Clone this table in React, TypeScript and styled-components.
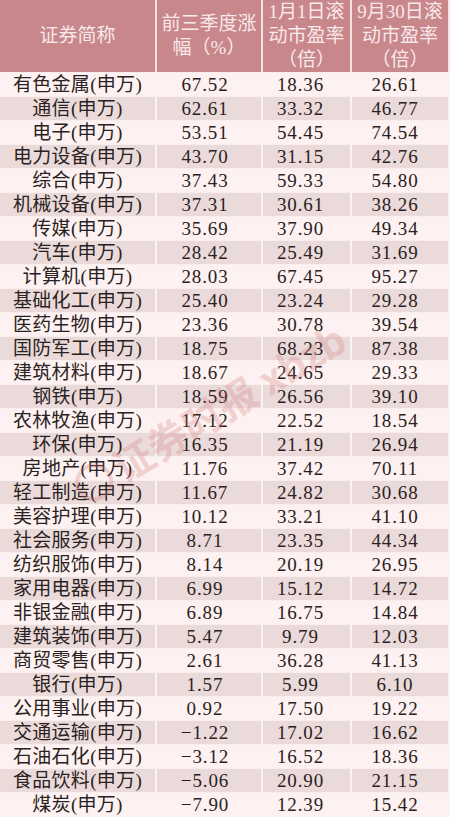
import styled, { createGlobalStyle } from 'styled-components';

type Row = [string, string, string, string];

const rows: Row[] = [
  ['有色金属', '67.52', '18.36', '26.61'],
  ['通信', '62.61', '33.32', '46.77'],
  ['电子', '53.51', '54.45', '74.54'],
  ['电力设备', '43.70', '31.15', '42.76'],
  ['综合', '37.43', '59.33', '54.80'],
  ['机械设备', '37.31', '30.61', '38.26'],
  ['传媒', '35.69', '37.90', '49.34'],
  ['汽车', '28.42', '25.49', '31.69'],
  ['计算机', '28.03', '67.45', '95.27'],
  ['基础化工', '25.40', '23.24', '29.28'],
  ['医药生物', '23.36', '30.78', '39.54'],
  ['国防军工', '18.75', '68.23', '87.38'],
  ['建筑材料', '18.67', '24.65', '29.33'],
  ['钢铁', '18.59', '26.56', '39.10'],
  ['农林牧渔', '17.12', '22.52', '18.54'],
  ['环保', '16.35', '21.19', '26.94'],
  ['房地产', '11.76', '37.42', '70.11'],
  ['轻工制造', '11.67', '24.82', '30.68'],
  ['美容护理', '10.12', '33.21', '41.10'],
  ['社会服务', '8.71', '23.35', '44.34'],
  ['纺织服饰', '8.14', '20.19', '26.95'],
  ['家用电器', '6.99', '15.12', '14.72'],
  ['非银金融', '6.89', '16.75', '14.84'],
  ['建筑装饰', '5.47', '9.79', '12.03'],
  ['商贸零售', '2.61', '36.28', '41.13'],
  ['银行', '1.57', '5.99', '6.10'],
  ['公用事业', '0.92', '17.50', '19.22'],
  ['交通运输', '−1.22', '17.02', '16.62'],
  ['石油石化', '−3.12', '16.52', '18.36'],
  ['食品饮料', '−5.06', '20.90', '21.15'],
  ['煤炭', '−7.90', '12.39', '15.42'],
];

const GlobalStyle = createGlobalStyle`
  html, body {
    margin: 0;
    padding: 0;
    background: #fdf2f1;
  }
  body {
    font-family: "Liberation Serif", "Noto Sans CJK SC", serif;
  }
`;

const Page = styled.div`
  position: relative;
  width: 450px;
  height: 817px;
  overflow: hidden;
`;

const Table = styled.div`
  display: grid;
  grid-template-columns: 157px 106px 89px 98px;
  grid-auto-rows: 24px;
`;

const HeadCell = styled.div`
  grid-row: span 3;
  background: #c8878b;
  color: #f9e9ea;
  font-size: 19px;
  line-height: 24px;
  display: flex;
  flex-direction: column;
  align-items: center;
  justify-content: center;
  text-align: center;
  border-right: 2px solid #f6e4e4;
  &:last-child { border-right: none; }
`;

const Cell = styled.div<{ $dark: boolean; $pad?: number }>`
  background: ${(p) => (p.$dark ? '#ebdada' : '#fdf2f1')};
  border-right: 2px solid #fbf3f3;
  border-top: 1px solid #f8eeee;
  color: #2a2222;
  font-size: 19px;
  line-height: 23px;
  white-space: nowrap;
  text-align: center;
  padding-right: ${(p) => p.$pad ?? 0}px;
`;

const NameCell = styled(Cell)`
  letter-spacing: 0.3px;
`;

const NumCell = styled(Cell)`
  letter-spacing: 0.9px;
`;

const Watermark = styled.div`
  position: absolute;
  left: 78px;
  top: 470px;
  transform: rotate(-31deg);
  transform-origin: left center;
  color: rgba(205, 110, 110, 0.26);
  font-family: "Noto Sans CJK SC", "Liberation Sans", sans-serif;
  font-weight: 700;
  font-size: 40px;
  line-height: 44px;
  white-space: nowrap;
  pointer-events: none;
  display: flex;
  align-items: center;
  gap: 6px;
`;

const Logo = styled.span`
  display: inline-block;
  width: 30px;
  height: 30px;
  border-radius: 50%;
  border: 4px solid rgba(205, 110, 110, 0.26);
`;

export default function App() {
  return (
    <Page>
      <GlobalStyle />
      <Table>
        <HeadCell>证券简称</HeadCell>
        <HeadCell>
          <span>前三季度涨</span>
          <span>幅（%）</span>
        </HeadCell>
        <HeadCell>
          <span>1月1日滚</span>
          <span>动市盈率</span>
          <span>（倍）</span>
        </HeadCell>
        <HeadCell>
          <span>9月30日滚</span>
          <span>动市盈率</span>
          <span>（倍）</span>
        </HeadCell>
        {rows.map(([name, a, b, c], i) => {
          const dark = i % 2 === 1;
          return [
            <NameCell key={name + 'n'} $dark={dark}>{name}(申万)</NameCell>,
            <NumCell key={name + 'a'} $dark={dark} $pad={8}>{a}</NumCell>,
            <NumCell key={name + 'b'} $dark={dark} $pad={12}>{b}</NumCell>,
            <NumCell key={name + 'c'} $dark={dark} $pad={10}>{c}</NumCell>,
          ];
        })}
      </Table>
      <Watermark>
        <Logo />
        证券时报 xbzb
      </Watermark>
    </Page>
  );
}
